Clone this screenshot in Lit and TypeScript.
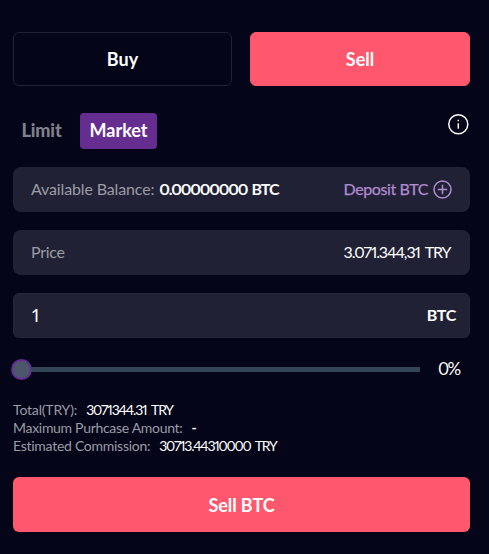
import { LitElement, html, css } from "lit";
import { customElement, state } from "lit/decorators.js";

@customElement("app-root")
export class AppRoot extends LitElement {
  static styles = css`
    :host {
      display: block;
      box-sizing: border-box;
      min-height: 554px;
      padding: 32px 19px 22px 13px;
      background: #040519;
      color: #fff;
      font: 400 16px/20px Lato, "Open Sans", sans-serif;
      font-variant-numeric: proportional-nums;
    }
    * { box-sizing: border-box; }
    span { white-space: nowrap; }
    button {
      border: 0;
      margin: 0;
      padding: 0;
      color: inherit;
      font: inherit;
      cursor: pointer;
    }
    .sides { display: grid; grid-template-columns: 219px 220px; gap: 18px; }
    .side {
      height: 54px;
      border-radius: 6px;
      font-size: 18px;
      font-weight: 700;
      background: transparent;
      border: 1px solid #202134;
    }
    .side.active { background: #ff576d; border-color: #ff576d; }
    .tabs { display: flex; height: 36px; margin-top: 27px; }
    .tab {
      height: 36px;
      border-radius: 4px;
      background: transparent;
      color: #80818b;
      font-size: 18px;
      font-weight: 700;
      width: 57px;
      padding-bottom: 2px;
      margin-right: 10px;
    }
    .tab.active { width: 77px; background: #662d91; color: #fff; }
    .t-limit { font-weight: 900; letter-spacing: -0.1px; }
    .info { width: 24px; height: 24px; margin: -1px 0 0 auto; }
    .info svg, .plus svg { display: block; }
    .field {
      display: flex;
      align-items: center;
      height: 45px;
      margin-top: 18px;
      padding: 0 18px 1px;
      border-radius: 8px;
      background: #202134;
    }
    .field.entry { border: 1px solid #25263a; padding: 0 13px 2px 17px; border-radius: 6px; }
    .label { color: #9b9ca4; }
    .strong { font-weight: 700; }
    .end { margin-left: auto; }
    .t-avail { letter-spacing: -0.14px; }
    .balance { margin-left: 5px; letter-spacing: -1.15px; word-spacing: 1.5px; }
    .deposit { display: flex; align-items: center; color: #b18bd0; }
    .t-deposit { letter-spacing: -0.4px; -webkit-text-stroke: 0.25px currentColor; }
    .plus { margin-left: 5px; }
    .t-price { letter-spacing: -0.3px; }
    .t-pricevalue { letter-spacing: -1.1px; word-spacing: 2.5px; margin-right: 1.5px; }
    .t-unit { letter-spacing: -0.3px; padding-top: 1px; }
    .amount { font-size: 18px; margin-left: 1px; }
    .sliderrow { display: flex; align-items: center; height: 21px; margin-top: 21px; }
    .track { position: relative; width: 407px; height: 5px; background: #334454; }
    .thumb {
      position: absolute;
      left: -2px;
      top: -8px;
      width: 21px;
      height: 21px;
      border-radius: 50%;
      border: 2px solid #662d91;
      background: #4a586a;
    }
    .percent { margin-left: 18px; font-size: 17px; letter-spacing: -1.8px; padding-bottom: 2px; }
    .stats { margin-top: 21px; font-size: 14px; line-height: 18px; }
    .stat { display: flex; gap: 9px; height: 18px; }
    .t-total { letter-spacing: -0.18px; }
    .t-max { letter-spacing: -0.3px; }
    .t-comm { letter-spacing: -0.27px; }
    .t-totalv { letter-spacing: -1.15px; word-spacing: 2.5px; }
    .t-commv { letter-spacing: -1.25px; word-spacing: 2.5px; }
    .submit {
      display: block;
      width: 457px;
      height: 55px;
      margin-top: 22px;
      border-radius: 6px;
      background: #ff576d;
      font-size: 18px;
      font-weight: 700;
      letter-spacing: -0.1px;
    }
  `;

  @state() private percent = 0;

  render() {
    return html`
      <div class="sides">
        <button class="side"><span class="t-buy">Buy</span></button>
        <button class="side active"><span class="t-sell">Sell</span></button>
      </div>
      <div class="tabs">
        <button class="tab"><span class="t-limit">Limit</span></button>
        <button class="tab active"><span class="t-market">Market</span></button>
        <div class="info">
          <svg width="24" height="24" viewBox="0 0 24 24" fill="none" stroke="#fff" stroke-width="1.5">
            <circle cx="12.3" cy="12.3" r="9.5" />
            <path d="M12.3 11.3v5.4" />
            <path d="M12.3 7.8v1.5" />
          </svg>
        </div>
      </div>
      <div class="field">
        <span class="label t-avail">Available Balance:</span>
        <span class="strong balance">0.00000000 BTC</span>
        <div class="deposit end">
          <span class="t-deposit">Deposit BTC</span>
          <div class="plus">
            <svg width="19" height="19" viewBox="0 0 19 19" fill="none" stroke="currentColor" stroke-width="1.5">
              <circle cx="9.5" cy="9.5" r="8.5" />
              <path d="M9.5 4.8v9.4M4.8 9.5h9.4" />
            </svg>
          </div>
        </div>
      </div>
      <div class="field">
        <span class="label t-price">Price</span>
        <span class="end t-pricevalue">3.071.344,31 TRY</span>
      </div>
      <div class="field entry">
        <span class="amount">1</span>
        <span class="strong end t-unit">BTC</span>
      </div>
      <div class="sliderrow">
        <div class="track"><div class="thumb"></div></div>
        <span class="percent">${this.percent}%</span>
      </div>
      <div class="stats">
        <div class="stat"><span class="label t-total">Total(TRY):</span><span class="t-totalv">3071344.31 TRY</span></div>
        <div class="stat"><span class="label t-max">Maximum Purhcase Amount:</span><span class="strong">-</span></div>
        <div class="stat"><span class="label t-comm">Estimated Commission:</span><span class="t-commv">30713.44310000 TRY</span></div>
      </div>
      <button class="submit"><span class="t-submit">Sell BTC</span></button>
    `;
  }
}
